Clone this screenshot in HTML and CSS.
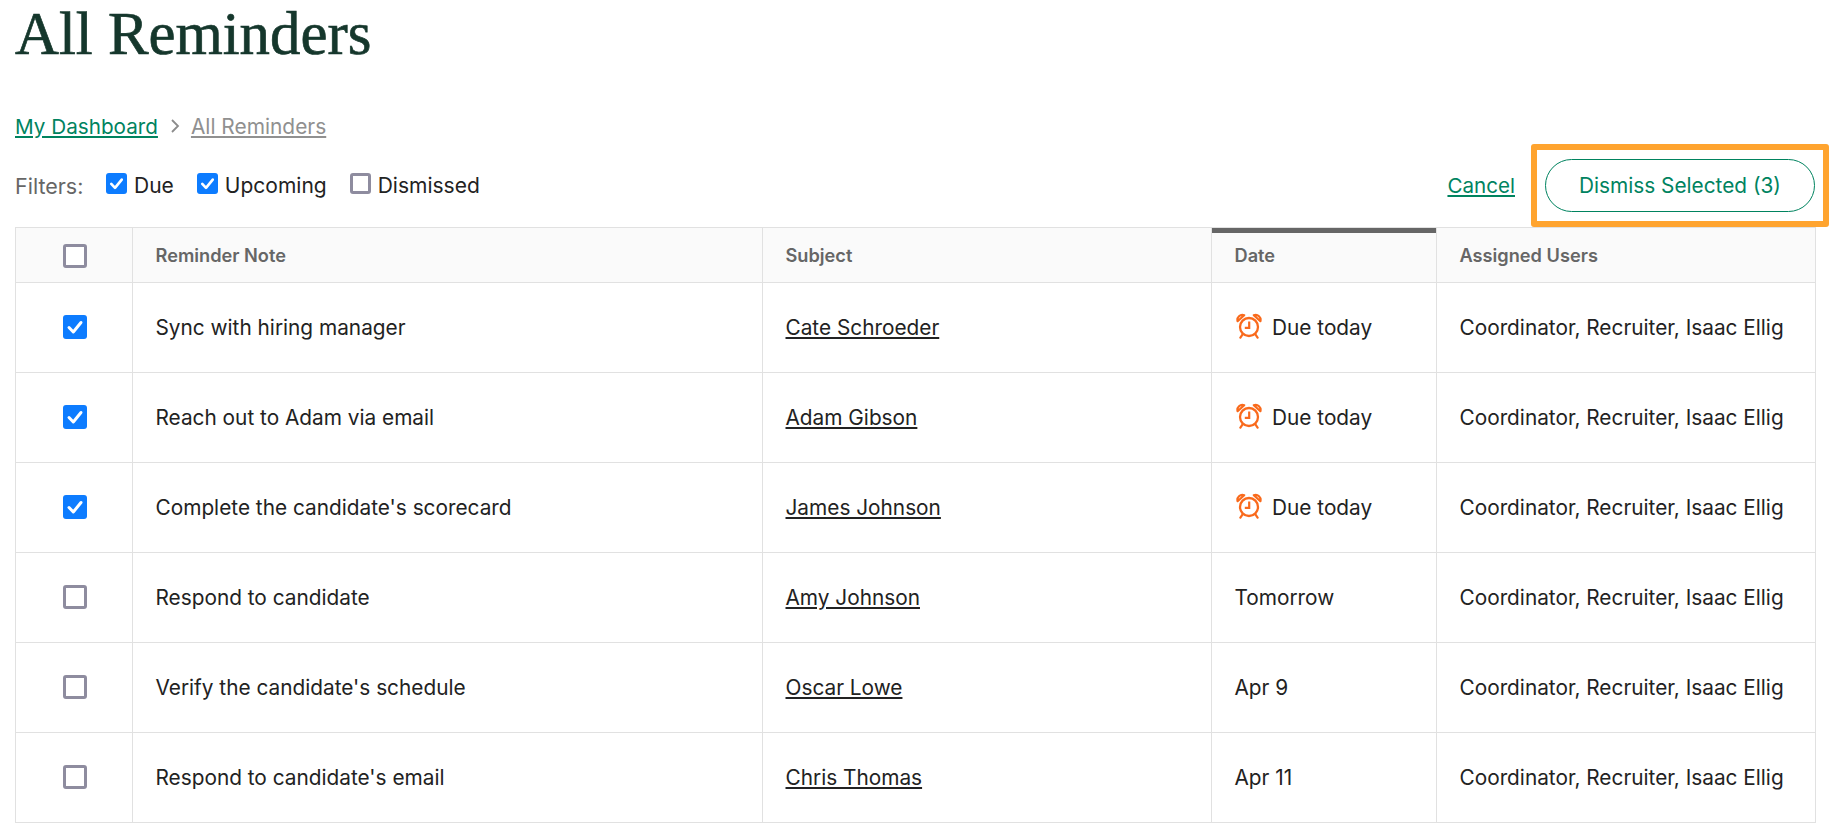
FILE: index.html
```html
<!DOCTYPE html>
<html lang="en">
<head>
<meta charset="utf-8">
<title>All Reminders</title>
<link rel="stylesheet" href="styles.css">
</head>
<body>
<svg class="defs" width="0" height="0" aria-hidden="true">
  <symbol id="alarm" viewBox="0 0 26 26">
    <circle cx="13" cy="14" r="9" fill="none" stroke="currentColor" stroke-width="2.3"/>
    <path d="M13.2 8.5V14.8H8.8" fill="none" stroke="currentColor" stroke-width="2.2"/>
    <path d="M1.6 8.2C0.6 4.4 4.2 0.6 8.2 2.2Z M24.4 8.2C25.4 4.4 21.8 0.6 17.8 2.2Z" fill="none" stroke="currentColor" stroke-width="2.2" stroke-linejoin="round"/>
    <path d="M6.6 21.4L4.4 24.6M19.4 21.4L21.6 24.6" fill="none" stroke="currentColor" stroke-width="2.2" stroke-linecap="round"/>
  </symbol>
</svg>
<main class="page">
  <h1 class="title">All Reminders</h1>
  <nav class="crumbs">
    <a class="crumb-link" href="#">My Dashboard</a>
    <svg class="crumb-sep" viewBox="0 0 10 16" width="10" height="16"><path d="M2 2L8 8L2 14" fill="none" stroke="currentColor" stroke-width="1.8"/></svg>
    <a class="crumb-current" href="#">All Reminders</a>
  </nav>
  <div class="toolbar">
    <div class="filters">
      <span class="filters-label">Filters:</span>
      <label class="filter"><span class="box on small"><svg viewBox="0 0 24 24"><path d="M6 12.5L10.3 17L18 7.5"/></svg></span>Due</label>
      <label class="filter"><span class="box on small"><svg viewBox="0 0 24 24"><path d="M6 12.5L10.3 17L18 7.5"/></svg></span>Upcoming</label>
      <label class="filter"><span class="box small"></span>Dismissed</label>
    </div>
    <div class="actions">
      <a class="cancel" href="#">Cancel</a>
      <button class="dismiss" type="button">Dismiss Selected (3)</button>
      <span class="highlight"></span>
    </div>
  </div>
  <table class="grid">
    <colgroup>
      <col class="c-check"><col class="c-note"><col class="c-subject"><col class="c-date"><col class="c-users">
    </colgroup>
    <thead>
      <tr>
        <th class="check"><span class="box head-box"></span></th>
        <th>Reminder Note</th>
        <th>Subject</th>
        <th class="sorted">Date</th>
        <th>Assigned Users</th>
      </tr>
    </thead>
    <tbody>
      <tr>
        <td class="check"><span class="box on"><svg viewBox="0 0 24 24"><path d="M6 12.5L10.3 17L18 7.5"/></svg></span></td>
        <td>Sync with hiring manager</td>
        <td><a class="person" href="#">Cate Schroeder</a></td>
        <td><span class="due"><svg class="alarm"><use href="#alarm"/></svg>Due today</span></td>
        <td>Coordinator, Recruiter, Isaac Ellig</td>
      </tr>
      <tr>
        <td class="check"><span class="box on"><svg viewBox="0 0 24 24"><path d="M6 12.5L10.3 17L18 7.5"/></svg></span></td>
        <td>Reach out to Adam via email</td>
        <td><a class="person" href="#">Adam Gibson</a></td>
        <td><span class="due"><svg class="alarm"><use href="#alarm"/></svg>Due today</span></td>
        <td>Coordinator, Recruiter, Isaac Ellig</td>
      </tr>
      <tr>
        <td class="check"><span class="box on"><svg viewBox="0 0 24 24"><path d="M6 12.5L10.3 17L18 7.5"/></svg></span></td>
        <td>Complete the candidate's scorecard</td>
        <td><a class="person" href="#">James Johnson</a></td>
        <td><span class="due"><svg class="alarm"><use href="#alarm"/></svg>Due today</span></td>
        <td>Coordinator, Recruiter, Isaac Ellig</td>
      </tr>
      <tr>
        <td class="check"><span class="box"></span></td>
        <td>Respond to candidate</td>
        <td><a class="person" href="#">Amy Johnson</a></td>
        <td>Tomorrow</td>
        <td>Coordinator, Recruiter, Isaac Ellig</td>
      </tr>
      <tr>
        <td class="check"><span class="box"></span></td>
        <td>Verify the candidate's schedule</td>
        <td><a class="person" href="#">Oscar Lowe</a></td>
        <td>Apr 9</td>
        <td>Coordinator, Recruiter, Isaac Ellig</td>
      </tr>
      <tr>
        <td class="check"><span class="box"></span></td>
        <td>Respond to candidate's email</td>
        <td><a class="person" href="#">Chris Thomas</a></td>
        <td>Apr 11</td>
        <td>Coordinator, Recruiter, Isaac Ellig</td>
      </tr>
    </tbody>
  </table>
</main>
</body>
</html>
```
FILE: styles.css
```css
* { box-sizing: border-box; }
html, body { margin: 0; padding: 0; background: #fff; overflow: hidden; }
body { font-family: "Inter", "Liberation Sans", sans-serif; color: #222; font-size: 20.8px; }
.defs { position: absolute; }
.page { width: 1830px; height: 831px; padding: 0 15px; }
.title { margin: 0; height: 100px; font-family: "Liberation Serif", serif; font-weight: 400; font-size: 60.8px; line-height: 68px; color: #15372c; -webkit-text-stroke: 0.7px #15372c; }
.crumbs { display: flex; align-items: center; height: 52px; font-size: 20.7px; }
.crumb-link { color: #00835f; }
.crumb-current { color: #909090; font-size: 20.9px; }
.crumb-sep { color: #8c8c8c; margin: 0 11px 0 12px; }
.toolbar { display: flex; justify-content: space-between; align-items: center; height: 75px; padding-bottom: 8px; }
.filters { display: flex; align-items: center; }
.filters-label { color: #666; width: 91px; font-size: 21.5px; }
.filter { display: flex; align-items: center; gap: 7px; margin-right: 23px; font-size: 21px; }
.actions { display: flex; align-items: center; position: relative; gap: 30px; }
.cancel { color: #00835f; font-size: 20.6px; }
.dismiss { width: 270px; height: 53px; border: 1px solid #00835f; border-radius: 27px; background: #fff; color: #00835f; font: inherit; }
.highlight { position: absolute; right: -14px; top: -15px; width: 298px; height: 83px; border: 6px solid #ffa42f; border-radius: 3px; }
.box { display: inline-block; width: 24px; height: 24px; border: 3px solid #8e8c9f; border-radius: 3px; background: #fff; vertical-align: middle; position: relative; left: 1px; top: -2px; }
.box.head-box { top: 0; }
.box.small { width: 21px; height: 21px; left: 0; top: -2px; }
.box.on { background: #0d7cff; border-color: #0d7cff; border-width: 0; }
.box svg { display: block; width: 100%; height: 100%; fill: none; stroke: #fff; stroke-width: 3; stroke-linecap: round; stroke-linejoin: round; }
.grid { border-collapse: collapse; table-layout: fixed; width: 1800px; }
.c-check { width: 117px; }
.c-note { width: 630px; }
.c-subject { width: 449px; }
.c-date { width: 225px; }
.c-users { width: 379px; }
.grid th, .grid td { border: 1px solid #e1e1e1; padding: 0 0 0 22.5px; text-align: left; white-space: nowrap; overflow: hidden; }
.grid th { height: 55px; background: #fafafa; color: #666; font-size: 18.2px; font-weight: 600; }
.grid td { height: 90px; }
.grid .check { padding: 0; text-align: center; }
.grid th.sorted { box-shadow: inset 0 5px 0 #666; }
.person { color: #222; }
.due { display: flex; align-items: center; gap: 10px; }
.alarm { width: 26px; height: 26px; margin: -4px 0 0 1.5px; color: #f96a1c; }
```
